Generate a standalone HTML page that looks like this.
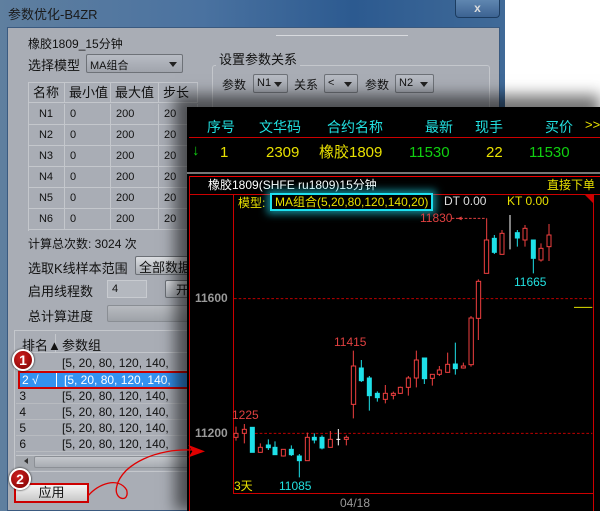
<!DOCTYPE html>
<html><head><meta charset="utf-8"><style>
*{margin:0;padding:0;box-sizing:border-box}
body{width:600px;height:511px;overflow:hidden;background:#fff;position:relative;font-family:"Liberation Sans","Noto Sans CJK SC",sans-serif;font-size:12px;color:#111}
.a{position:absolute;white-space:nowrap}
.win{left:0;top:0;width:505px;height:511px;background:linear-gradient(90deg,#5f7f9f 0%,#4a72a0 40%,#2c5a90 70%,#406a98 100%);}
.panel{left:7px;top:27px;width:493px;height:484px;background:#a9adb5;border:1px solid #3a5a80}
.combo{background:linear-gradient(#b8bcc4,#a0a4ac);border:1px solid #6e7278;border-radius:2px;height:19px;font-size:11px;padding:2px 3px}
.combo:after{content:"";position:absolute;right:5px;top:7px;border:4px solid transparent;border-top:5px solid #222}
.tc{border-right:1px solid #c4c7cc;border-bottom:1px solid #c4c7cc;height:21px;line-height:21px;position:absolute;font-size:11px}
.btn{background:linear-gradient(#dcdee2,#a8acb2);border:1px solid #6c7076;border-radius:2px}
.row{position:absolute;left:16px;width:172px;height:16px;line-height:16px;font-size:12px;border-bottom:1px solid #b8bbc0}
.row span{position:absolute;left:46px}
.dark{left:187px;top:107px;width:413px;height:404px;background:#000;box-shadow:-6px -6px 14px 6px rgba(0,0,0,.55)}
.cy{color:#22e0e0}.ye{color:#e8e000}.gr{color:#10d010}
.badge{width:22px;height:22px;border-radius:50%;background:radial-gradient(circle at 40% 35%,#d02020,#7a0000);border:2px solid #fff;color:#fff;font-weight:bold;font-size:14px;text-align:center;line-height:18px;box-shadow:0 0 2px #000}
</style></head><body>
<div class="a win"></div>
<div class="a" style="left:8px;top:4px;font-size:13px;color:#1a1a1a">参数优化-B4ZR</div>
<div class="a" style="left:455px;top:0;width:45px;height:18px;border:1px solid #1c3c60;border-top:0;border-radius:0 0 4px 4px;background:linear-gradient(#5f86b0,#3c6392);color:#ddd;text-align:center;font-weight:bold;font-size:12px;line-height:16px">x</div>
<div class="a panel"></div>
<div class="a" style="left:276px;top:35px;width:132px;height:1px;background:#d8dade"></div>
<div class="a" style="left:28px;top:35px;font-size:12px">橡胶1809_15分钟</div>
<div class="a" style="left:28px;top:55px;font-size:13px">选择模型</div>
<div class="a combo" style="left:86px;top:54px;width:97px">MA组合</div>
<div class="a" style="left:212px;top:65px;width:278px;height:60px;border:1px solid #c4c7cc;border-radius:3px"></div>
<div class="a" style="left:216px;top:49px;font-size:13px;background:#a9adb5;padding:0 3px">设置参数关系</div>
<div class="a" style="left:222px;top:76px">参数</div>
<div class="a combo" style="left:253px;top:74px;width:35px">N1</div>
<div class="a" style="left:294px;top:76px">关系</div>
<div class="a combo" style="left:324px;top:74px;width:34px">&lt;</div>
<div class="a" style="left:365px;top:76px">参数</div>
<div class="a combo" style="left:395px;top:74px;width:39px">N2</div>
<div class="a" style="left:28px;top:82px;width:170px;height:149px;border-left:1px solid #c4c7cc;border-top:1px solid #c4c7cc"></div>
<div class="tc" style="left:28px;top:82px;width:37px;text-align:center;font-size:13px">名称</div>
<div class="tc" style="left:65px;top:82px;width:46px;font-size:13px;padding-left:4px">最小值</div>
<div class="tc" style="left:111px;top:82px;width:48px;font-size:13px;padding-left:4px">最大值</div>
<div class="tc" style="left:159px;top:82px;width:39px;font-size:13px;padding-left:4px">步长</div>
<div class="tc" style="left:28px;top:104px;width:37px;text-align:center">N1</div><div class="tc" style="left:65px;top:104px;width:46px;padding-left:5px">0</div><div class="tc" style="left:111px;top:104px;width:48px;padding-left:5px">200</div><div class="tc" style="left:159px;top:104px;width:39px;padding-left:5px">20</div>
<div class="tc" style="left:28px;top:125px;width:37px;text-align:center">N2</div><div class="tc" style="left:65px;top:125px;width:46px;padding-left:5px">0</div><div class="tc" style="left:111px;top:125px;width:48px;padding-left:5px">200</div><div class="tc" style="left:159px;top:125px;width:39px;padding-left:5px">20</div>
<div class="tc" style="left:28px;top:146px;width:37px;text-align:center">N3</div><div class="tc" style="left:65px;top:146px;width:46px;padding-left:5px">0</div><div class="tc" style="left:111px;top:146px;width:48px;padding-left:5px">200</div><div class="tc" style="left:159px;top:146px;width:39px;padding-left:5px">20</div>
<div class="tc" style="left:28px;top:167px;width:37px;text-align:center">N4</div><div class="tc" style="left:65px;top:167px;width:46px;padding-left:5px">0</div><div class="tc" style="left:111px;top:167px;width:48px;padding-left:5px">200</div><div class="tc" style="left:159px;top:167px;width:39px;padding-left:5px">20</div>
<div class="tc" style="left:28px;top:188px;width:37px;text-align:center">N5</div><div class="tc" style="left:65px;top:188px;width:46px;padding-left:5px">0</div><div class="tc" style="left:111px;top:188px;width:48px;padding-left:5px">200</div><div class="tc" style="left:159px;top:188px;width:39px;padding-left:5px">20</div>
<div class="tc" style="left:28px;top:209px;width:37px;text-align:center">N6</div><div class="tc" style="left:65px;top:209px;width:46px;padding-left:5px">0</div><div class="tc" style="left:111px;top:209px;width:48px;padding-left:5px">200</div><div class="tc" style="left:159px;top:209px;width:39px;padding-left:5px">20</div>
<div class="a" style="left:28px;top:235px">计算总次数: 3024 次</div>
<div class="a" style="left:28px;top:258px;font-size:13px">选取K线样本范围</div>
<div class="a btn" style="left:135px;top:256px;width:60px;height:19px;font-size:13px;padding-left:3px">全部数据</div>
<div class="a" style="left:28px;top:281px;font-size:13px">启用线程数</div>
<div class="a" style="left:107px;top:280px;width:40px;height:18px;background:#b4b8bf;border:1px solid #c8cbd0;font-size:11px;padding:2px 4px">4</div>
<div class="a btn" style="left:165px;top:280px;width:30px;height:18px;padding-left:10px">开</div>
<div class="a" style="left:28px;top:306px;font-size:13px">总计算进度</div>
<div class="a" style="left:107px;top:305px;width:90px;height:17px;background:linear-gradient(#b8bbc0,#9ea2a8);border:1px solid #8a8e94;border-radius:2px"></div>
<div class="a" style="left:14px;top:330px;width:180px;height:142px;border:1px solid #c4c7cc;background:#a9adb5"></div>
<div class="a" style="left:16px;top:332px;width:172px;height:21px;border-bottom:1px solid #c4c7cc"></div>
<div class="a" style="left:55px;top:334px;width:1px;height:18px;background:#c4c7cc"></div>
<div class="a" style="left:22px;top:335px;font-size:13px">排名▲</div>
<div class="a" style="left:62px;top:335px;font-size:13px">参数组</div>
<div class="row" style="top:355px"><span>[5, 20, 80, 120, 140,</span></div>
<div class="a" style="left:18px;top:371px;width:172px;height:18px;background:#3392f0;border:2px solid #c00;color:#fff;line-height:14px;font-size:12px"><span style="position:absolute;left:2px">2 √</span><span style="position:absolute;left:36px;width:1px;height:14px;background:#fff"></span><span style="position:absolute;left:44px">[5, 20, 80, 120, 140,</span></div>
<div class="row" style="top:388px">&nbsp;3<span>[5, 20, 80, 120, 140,</span></div>
<div class="row" style="top:404px">&nbsp;4<span>[5, 20, 80, 120, 140,</span></div>
<div class="row" style="top:420px">&nbsp;5<span>[5, 20, 80, 120, 140,</span></div>
<div class="row" style="top:436px">&nbsp;6<span>[5, 20, 80, 120, 140,</span></div>
<div class="a" style="left:16px;top:455px;width:172px;height:15px;background:#a4a8ae;border-top:1px solid #c4c7cc"></div>
<div class="a" style="left:34px;top:456px;width:160px;height:12px;background:linear-gradient(#c4c7cc,#a8acb2);border:1px solid #8c9096;border-radius:2px"></div>
<div class="a" style="left:21px;top:458px;border:3px solid transparent;border-right:4px solid #333"></div>
<div class="a" style="left:14px;top:483px;width:75px;height:20px;border:2px solid #c00;background:linear-gradient(#f4f4f4,#c8c8c8);text-align:center;font-size:13px;line-height:16px">应用</div>
<div class="a dark"></div>
<div class="a cy" style="left:207px;top:117px;font-size:14px">序号</div>
<div class="a cy" style="left:259px;top:117px;font-size:14px">文华码</div>
<div class="a cy" style="left:327px;top:117px;font-size:14px">合约名称</div>
<div class="a cy" style="left:425px;top:117px;font-size:14px">最新</div>
<div class="a cy" style="left:475px;top:117px;font-size:14px">现手</div>
<div class="a cy" style="left:545px;top:117px;font-size:14px">买价</div>
<div class="a ye" style="left:585px;top:117px;font-size:13px">&gt;&gt;</div>
<div class="a" style="left:189px;top:137px;width:411px;height:1px;background:#c00"></div>
<div class="a gr" style="left:192px;top:142px;font-size:15px;font-weight:bold">↓</div>
<div class="a ye" style="left:220px;top:144px;font-size:15px">1</div>
<div class="a ye" style="left:266px;top:144px;font-size:15px">2309</div>
<div class="a ye" style="left:319px;top:141px;font-size:15px">橡胶1809</div>
<div class="a gr" style="left:409px;top:144px;font-size:15px">11530</div>
<div class="a ye" style="left:486px;top:144px;font-size:15px">22</div>
<div class="a gr" style="left:529px;top:144px;font-size:15px">11530</div>
<div class="a" style="left:187px;top:172px;width:413px;height:2px;background:#777"></div>
<div class="a" style="left:189px;top:176px;width:411px;height:1px;background:#e00"></div>
<div class="a" style="left:189px;top:176px;width:1px;height:335px;background:#c00"></div>
<div class="a" style="left:208px;top:176px;color:#fff;font-size:12px">橡胶1809(SHFE ru1809)15分钟</div>
<div class="a ye" style="left:547px;top:176px;font-size:12px">直接下单</div>
<div class="a" style="left:189px;top:194px;width:411px;height:1px;background:#c00"></div>
<div class="a" style="left:233px;top:194px;width:1px;height:300px;background:#c00"></div>
<div class="a" style="left:593px;top:194px;width:1px;height:317px;background:#c00"></div>
<div class="a" style="left:233px;top:493px;width:360px;height:1px;background:#c00"></div>
<div class="a" style="left:585px;top:195px;border:4px solid #c00;border-left-color:transparent;border-bottom-color:transparent"></div>
<div class="a ye" style="left:238px;top:194px;font-size:12px">模型:</div>
<div class="a ye" style="left:270px;top:193px;font-size:12px;border:2px solid #1de0f0;padding:0 3px;box-shadow:0 0 8px 3px rgba(30,220,240,.6);background:#000;height:18px;line-height:14px">MA组合(5,20,80,120,140,20)</div>
<div class="a" style="left:444px;top:194px;color:#ddd;font-size:12px">DT 0.00</div>
<div class="a ye" style="left:507px;top:194px;font-size:12px">KT 0.00</div>
<div class="a" style="left:420px;top:211px;color:#e04040;font-size:12px">11830</div>
<div class="a" style="left:195px;top:291px;color:#999;font-size:12px;font-weight:bold">11600</div>
<div class="a" style="left:195px;top:426px;color:#999;font-size:12px;font-weight:bold">11200</div>
<div class="a" style="left:232px;top:408px;color:#e04040;font-size:12px">1225</div>
<div class="a" style="left:334px;top:335px;color:#e04040;font-size:12px">11415</div>
<div class="a cy" style="left:514px;top:275px;font-size:12px">11665</div>
<div class="a cy" style="left:279px;top:479px;font-size:12px">11085</div>
<div class="a ye" style="left:234px;top:477px;font-size:12px">3天</div>
<div class="a" style="left:340px;top:496px;color:#999;font-size:12px">04/18</div>
<svg class="a" style="left:185px;top:100px;overflow:visible" width="415" height="411" viewBox="0 -450 1245 1233">
<g stroke-width="3" fill="none">
<line x1="147" y1="146" x2="1222" y2="146" stroke="#b00" stroke-dasharray="8 6"/>
<line x1="210" y1="550" x2="1222" y2="550" stroke="#b00" stroke-dasharray="8 6"/>
<line x1="800" y1="-95" x2="905" y2="-95" stroke="#e04040" stroke-dasharray="8 5"/>
<line x1="1167" y1="172" x2="1222" y2="172" stroke="#e0e000"/>
<g stroke="#f04040">
<path d="M153 530V572M178 522V580M226 580V608M295 598V620M367 548V632M436 543V592M484 556V586M505 302V505M601 405V460M625 425V448M646 410V432M670 378V437M694 302V412M742 373V407M763 348V378M788 308V368M835 338V356M858 198V350M880 88V270M905 -95V70M951 -60V14M1020 -75V-10M1068 -20V35M1092 -78V33"/>
<g fill="#000">
<rect x="147" y="550" width="12" height="12"/><rect x="172" y="538" width="12" height="12"/>
<rect x="220" y="592" width="12" height="15"/><rect x="289" y="598" width="12" height="20"/>
<rect x="361" y="562" width="12" height="70"/><rect x="430" y="568" width="12" height="24"/>
<rect x="478" y="562" width="12" height="6"/><rect x="499" y="348" width="13" height="115"/>
<rect x="595" y="430" width="12" height="18"/><rect x="619" y="430" width="12" height="6"/>
<rect x="640" y="412" width="12" height="18"/><rect x="664" y="384" width="12" height="28"/>
<rect x="688" y="330" width="12" height="54"/><rect x="736" y="373" width="12" height="12"/>
<rect x="757" y="360" width="12" height="13"/><rect x="782" y="343" width="12" height="24"/>
<rect x="829" y="348" width="12" height="6"/><rect x="852" y="204" width="13" height="140"/>
<rect x="874" y="94" width="13" height="111"/><rect x="898" y="-30" width="13" height="100"/>
<rect x="945" y="-50" width="12" height="63"/><rect x="1014" y="-65" width="12" height="35"/>
<rect x="1062" y="-5" width="12" height="35"/><rect x="1086" y="-45" width="12" height="35"/>
</g></g>
<g stroke="#1ee0e8" fill="#1ee0e8">
<path d="M250 568V600M270 574V614M319 586V618M343 612V682M388 550V580M411 556V598M529 330V396M553 378V482M577 424V455M811 278V374M718 324V402M928 -45V12M997 -60V-10M1045 -30V70"/>
<rect x="196" y="532" width="12" height="75"/><rect x="244" y="585" width="12" height="8"/>
<rect x="264" y="592" width="12" height="22"/><rect x="313" y="598" width="12" height="16"/>
<rect x="337" y="618" width="12" height="14"/><rect x="382" y="562" width="12" height="8"/>
<rect x="405" y="562" width="12" height="32"/><rect x="523" y="354" width="12" height="38"/>
<rect x="547" y="384" width="12" height="53"/><rect x="571" y="430" width="12" height="13"/>
<rect x="712" y="324" width="13" height="62"/><rect x="805" y="342" width="12" height="14"/>
<rect x="922" y="-35" width="12" height="42"/><rect x="991" y="-52" width="12" height="16"/>
<rect x="1039" y="-30" width="12" height="55"/>
</g>
<path d="M460 537V586M454 568H466M975 -105V-2" stroke="#fff"/>
<path d="M818 -95l12 -6v12z" fill="#e04040" stroke="none"/>
<path d="M-291 738 C-260 700 -200 680 -175 720 C-165 760 -215 750 -205 710 C-190 640 -80 595 20 600" stroke="#e00000" stroke-width="4"/>
<path d="M10 585 L60 604 L10 622 L22 604Z" fill="#e00000" stroke="none"/>
</g></svg>
<div class="a badge" style="left:12px;top:349px">1</div>
<div class="a badge" style="left:9px;top:468px">2</div>
</body></html>
